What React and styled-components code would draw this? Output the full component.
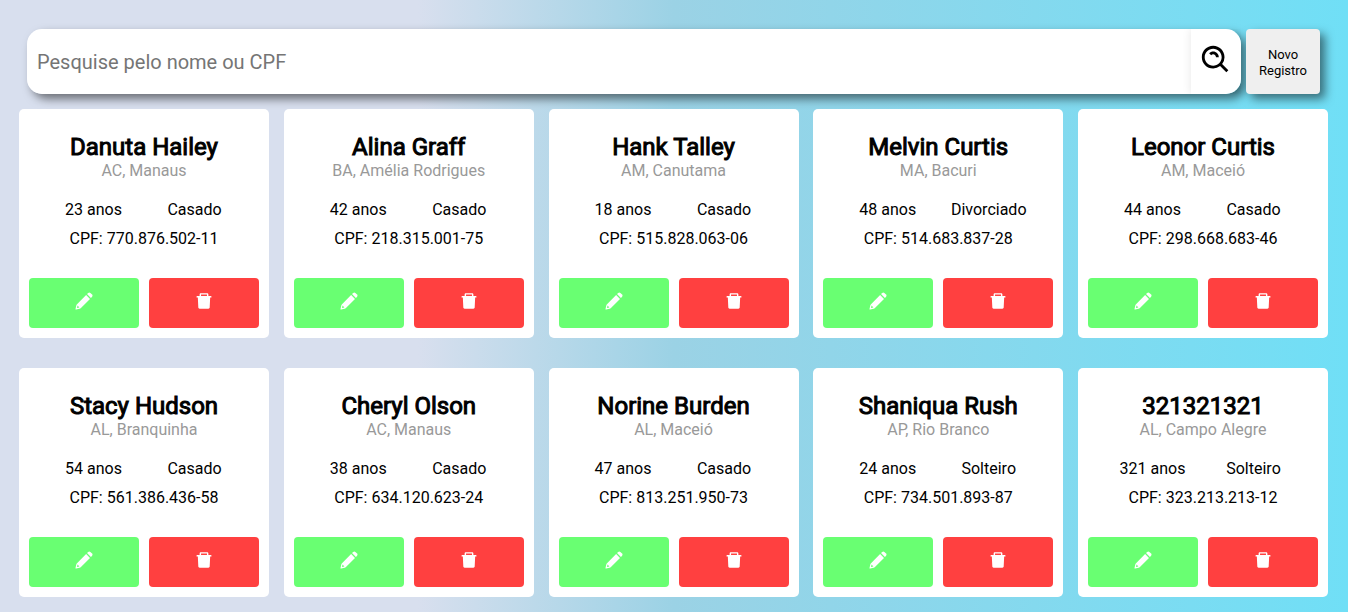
import React from 'react';
import styled, { createGlobalStyle } from 'styled-components';
import { BiSearchAlt } from 'react-icons/bi';
import { AiFillDelete } from 'react-icons/ai';

const GlobalStyle = createGlobalStyle`
  * { box-sizing: border-box; margin: 0; padding: 0; }
  body {
    min-height: 100vh;
    font-family: Roboto, "Liberation Sans", sans-serif;
    font-size: 16px;
    background: linear-gradient(90deg, #d8dfee 31%, #9bd2e5 50%, #70dff6 100%);
  }
  button, input { font: inherit; border: 0; }
  button { cursor: pointer; }
`;

const Page = styled.main`
  padding: 29px 20px 15px 19px;
`;

const Toolbar = styled.header`
  display: flex;
  gap: 5px;
  height: 65px;
  padding: 0 8px;
`;

const SearchForm = styled.form`
  display: flex;
  flex: 1;
  border-radius: 15px;
  box-shadow: 5px 5px 10px rgba(0, 0, 0, 0.5);
`;

const SearchInput = styled.input`
  flex: 1;
  min-width: 0;
  padding: 0 10px;
  font-size: 20px;
  background: #fff;
  border-radius: 15px 0 0 15px;
  outline: 0;
  &::placeholder { color: #757575; }
`;

const SearchButton = styled.button`
  display: grid;
  place-items: center;
  width: 50px;
  padding-bottom: 4px;
  font-size: 34px;
  color: #000;
  background: #fff;
  border-radius: 0 15px 15px 0;
  box-shadow: 0 0 10px rgba(0, 0, 0, 0.1);
  clip-path: inset(0 0 0 -10px);
`;

const NewButton = styled.button`
  width: 74px;
  padding: 2px 10px 0;
  font-size: 13px;
  line-height: 16px;
  color: #000;
  background: #efefef;
  border-radius: 4px;
  box-shadow: 5px 5px 10px rgba(0, 0, 0, 0.5);
`;

const Grid = styled.section`
  display: grid;
  grid-template-columns: repeat(auto-fill, 250px);
  justify-content: space-between;
  row-gap: 30px;
  margin-top: 15px;
`;

const Card = styled.article`
  padding: 24px 10px 10px;
  text-align: center;
  background: #fff;
  border-radius: 5px;
`;

const Name = styled.h2`
  font-size: 24px;
  font-weight: 400;
  line-height: 28px;
  -webkit-text-stroke: 1px #000;
`;

const Place = styled.p`
  line-height: 19px;
  color: #999;
`;

const Facts = styled.div`
  display: grid;
  grid-template-columns: 1fr 1fr;
  margin: 20px 14px 10px;
  line-height: 19px;
`;

const Cpf = styled.p`
  line-height: 19px;
`;

const Actions = styled.div`
  display: flex;
  gap: 10px;
  margin-top: 30px;
`;

const ActionButton = styled.button`
  display: grid;
  place-items: center;
  flex: 1;
  height: 50px;
  padding-bottom: 4px;
  font-size: 20px;
  color: #fff;
  background: ${({ $danger }) => ($danger ? '#ff4040' : '#69ff72')};
  border-radius: 4px;
`;

const PencilIcon = () => (
  <svg width="18" height="18" viewBox="0 0 18 18" fill="currentColor" aria-hidden="true">
    <path d="M12 2.1 13.2.9Q14.3 0 15.4.9L17.1 2.6Q18 3.7 17.1 4.8L15.9 6Z" />
    <path fillRule="evenodd" d="M11.1 3 15 6.9 5.7 16.2Q5.3 16.6 4.7 16.7L1.1 17.5Q.4 17.6.5 16.9L1.3 13.6Q1.4 13 1.8 12.4ZM2.6 13.6 1.9 16.1 4.4 15.4Z" />
  </svg>
);

const people = [
  ['Danuta Hailey', 'AC, Manaus', 23, 'Casado', '770.876.502-11'],
  ['Alina Graff', 'BA, Amélia Rodrigues', 42, 'Casado', '218.315.001-75'],
  ['Hank Talley', 'AM, Canutama', 18, 'Casado', '515.828.063-06'],
  ['Melvin Curtis', 'MA, Bacuri', 48, 'Divorciado', '514.683.837-28'],
  ['Leonor Curtis', 'AM, Maceió', 44, 'Casado', '298.668.683-46'],
  ['Stacy Hudson', 'AL, Branquinha', 54, 'Casado', '561.386.436-58'],
  ['Cheryl Olson', 'AC, Manaus', 38, 'Casado', '634.120.623-24'],
  ['Norine Burden', 'AL, Maceió', 47, 'Casado', '813.251.950-73'],
  ['Shaniqua Rush', 'AP, Rio Branco', 24, 'Solteiro', '734.501.893-87'],
  ['321321321', 'AL, Campo Alegre', 321, 'Solteiro', '323.213.213-12'],
];

export default function App() {
  return (
    <>
      <GlobalStyle />
      <Page>
        <Toolbar>
          <SearchForm onSubmit={(e) => e.preventDefault()}>
            <SearchInput aria-label="Pesquisar" placeholder="Pesquise pelo nome ou CPF" />
            <SearchButton aria-label="Buscar"><BiSearchAlt /></SearchButton>
          </SearchForm>
          <NewButton type="button">Novo Registro</NewButton>
        </Toolbar>
        <Grid>
          {people.map(([name, place, age, status, cpf]) => (
            <Card key={cpf}>
              <Name>{name}</Name>
              <Place>{place}</Place>
              <Facts>
                <span>{age} anos</span>
                <span>{status}</span>
              </Facts>
              <Cpf>CPF: {cpf}</Cpf>
              <Actions>
                <ActionButton type="button" aria-label={`Editar ${name}`}><PencilIcon /></ActionButton>
                <ActionButton type="button" $danger aria-label={`Excluir ${name}`}><AiFillDelete /></ActionButton>
              </Actions>
            </Card>
          ))}
        </Grid>
      </Page>
    </>
  );
}
